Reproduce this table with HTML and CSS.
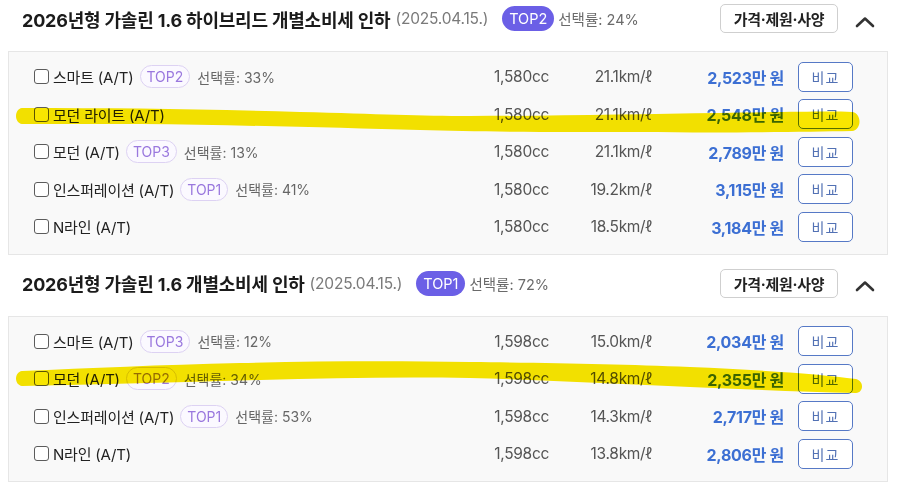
FILE: index.html
```html
<!DOCTYPE html>
<html lang="ko">
<head>
<meta charset="utf-8">
<title>트림 목록</title>
<link rel="stylesheet" href="styles.css">
</head>
<body>
<div class="page">
  <section class="group group-first">
    <header class="group-head">
      <h2 class="title">2026년형 가솔린 1.6 하이브리드 개별소비세 인하</h2>
      <span class="date">(2025.04.15.)</span>
      <span class="badge-fill">TOP2</span>
      <span class="head-rate">선택률: 24%</span>
      <button class="spec-btn">가격·제원·사양</button>
      <svg class="chev" width="20" height="12" viewBox="0 0 20 12"><path d="M2 10 L10 2.5 L18 10" fill="none" stroke="#333" stroke-width="2.6" stroke-linecap="round" stroke-linejoin="round"/></svg>
    </header>
    <div class="panel">
      <div class="row">
        <div class="name"><span class="check"></span><span class="label">스마트 (A/T)</span><span class="badge-line">TOP2</span><span class="rate">선택률: 33%</span></div>
        <div class="cc">1,580cc</div><div class="km">21.1km/ℓ</div><div class="price">2,523만 원</div><div class="cmp"><button class="cmp-btn">비교</button></div>
      </div>
      <div class="row">
        <div class="name"><span class="check"></span><span class="label">모던 라이트 (A/T)</span></div>
        <div class="cc">1,580cc</div><div class="km">21.1km/ℓ</div><div class="price">2,548만 원</div><div class="cmp"><button class="cmp-btn">비교</button></div>
      </div>
      <div class="row">
        <div class="name"><span class="check"></span><span class="label">모던 (A/T)</span><span class="badge-line">TOP3</span><span class="rate">선택률: 13%</span></div>
        <div class="cc">1,580cc</div><div class="km">21.1km/ℓ</div><div class="price">2,789만 원</div><div class="cmp"><button class="cmp-btn">비교</button></div>
      </div>
      <div class="row">
        <div class="name"><span class="check"></span><span class="label">인스퍼레이션 (A/T)</span><span class="badge-line">TOP1</span><span class="rate">선택률: 41%</span></div>
        <div class="cc">1,580cc</div><div class="km">19.2km/ℓ</div><div class="price">3,115만 원</div><div class="cmp"><button class="cmp-btn">비교</button></div>
      </div>
      <div class="row">
        <div class="name"><span class="check"></span><span class="label">N라인 (A/T)</span></div>
        <div class="cc">1,580cc</div><div class="km">18.5km/ℓ</div><div class="price">3,184만 원</div><div class="cmp"><button class="cmp-btn">비교</button></div>
      </div>
    </div>
  </section>

  <section class="group">
    <header class="group-head">
      <h2 class="title">2026년형 가솔린 1.6 개별소비세 인하</h2>
      <span class="date">(2025.04.15.)</span>
      <span class="badge-fill">TOP1</span>
      <span class="head-rate">선택률: 72%</span>
      <button class="spec-btn">가격·제원·사양</button>
      <svg class="chev" width="20" height="12" viewBox="0 0 20 12"><path d="M2 10 L10 2.5 L18 10" fill="none" stroke="#333" stroke-width="2.6" stroke-linecap="round" stroke-linejoin="round"/></svg>
    </header>
    <div class="panel">
      <div class="row">
        <div class="name"><span class="check"></span><span class="label">스마트 (A/T)</span><span class="badge-line">TOP3</span><span class="rate">선택률: 12%</span></div>
        <div class="cc">1,598cc</div><div class="km">15.0km/ℓ</div><div class="price">2,034만 원</div><div class="cmp"><button class="cmp-btn">비교</button></div>
      </div>
      <div class="row">
        <div class="name"><span class="check"></span><span class="label">모던 (A/T)</span><span class="badge-line">TOP2</span><span class="rate">선택률: 34%</span></div>
        <div class="cc">1,598cc</div><div class="km">14.8km/ℓ</div><div class="price">2,355만 원</div><div class="cmp"><button class="cmp-btn">비교</button></div>
      </div>
      <div class="row">
        <div class="name"><span class="check"></span><span class="label">인스퍼레이션 (A/T)</span><span class="badge-line">TOP1</span><span class="rate">선택률: 53%</span></div>
        <div class="cc">1,598cc</div><div class="km">14.3km/ℓ</div><div class="price">2,717만 원</div><div class="cmp"><button class="cmp-btn">비교</button></div>
      </div>
      <div class="row">
        <div class="name"><span class="check"></span><span class="label">N라인 (A/T)</span></div>
        <div class="cc">1,598cc</div><div class="km">13.8km/ℓ</div><div class="price">2,806만 원</div><div class="cmp"><button class="cmp-btn">비교</button></div>
      </div>
    </div>
  </section>

  <svg class="marker" width="900" height="489" viewBox="0 0 900 489">
    <path d="M22 104 C120 104 200 105 300 108 C380 110 420 112 470 112 C560 112 640 110 720 109 C790 108 830 107 852 108 C862 109 862 126 852 127 C800 128 720 129 640 128 C560 128 480 128 420 126 C340 124 240 121 140 120 C90 120 50 120 22 120 C14 119 14 105 22 104 Z" fill="#f8e600"/>
    <path d="M22 367 C90 364 160 361 240 359 C320 357 400 357 470 358 C560 359 620 360 690 363 C760 366 820 370 856 375 C864 377 864 388 856 389 C800 388 740 385 690 383 C620 380 540 376 470 374 C400 373 330 374 260 376 C180 378 100 381 22 382 C14 381 14 368 22 367 Z" fill="#f8e600"/>
  </svg>
</div>
</body>
</html>
```

FILE: styles.css
```css
* { box-sizing: border-box; }

html, body {
  margin: 0;
  padding: 0;
  background: #ffffff;
}

body {
  font-family: Inter, "Noto Sans CJK KR", "Noto Sans", sans-serif;
  color: #222;
  width: 900px;
  height: 489px;
  overflow: hidden;
}

.page {
  position: relative;
  width: 900px;
  height: 489px;
}

.group { margin-top: 13.5px; }
.group-first { margin-top: 3.5px; }

.group-head {
  display: flex;
  align-items: center;
  height: 30px;
  padding: 0 25px 0 22px;
  margin-bottom: 17.5px;
}

.title {
  margin: 0;
  font-size: 18px;
  font-weight: 700;
  color: #1b1b1b;
  letter-spacing: -0.2px;
  white-space: nowrap;
}

.date {
  margin-left: 5px;
  font-size: 15.5px;
  color: #7a7a7a;
  letter-spacing: -0.2px;
}

.badge-fill {
  margin-left: 14px;
  height: 25px;
  padding: 0 7px;
  border-radius: 13px;
  background: #6b5fe6;
  color: #fff;
  font-size: 14.5px;
  line-height: 25px;
}

.head-rate {
  margin-left: 4px;
  font-size: 14.5px;
  color: #6a6a6a;
}

.spec-btn {
  margin-left: auto;
  width: 118px;
  height: 29px;
  padding: 0;
  border: 1px solid #cfcfcf;
  border-radius: 5px;
  background: #fff;
  font-family: inherit;
  font-size: 15px;
  font-weight: 700;
  color: #222;
  letter-spacing: -0.3px;
}

.chev {
  margin-left: 17px;
  margin-top: 6px;
}

.panel {
  margin: 0 12px 0 8px;
  border: 1px solid #e6e6e6;
  background: #f9f9f9;
  padding: 6px 34px 8px 25px;
}

.row {
  display: grid;
  grid-template-columns: 1fr 79px 103px 132px 69px;
  align-items: center;
  height: 37.5px;
}

.name {
  display: flex;
  align-items: center;
  white-space: nowrap;
}

.check {
  width: 15px;
  height: 15px;
  border: 1.3px solid #5c5c5c;
  border-radius: 3px;
  background: #fff;
  margin-right: 4px;
}

.label {
  font-size: 15px;
  color: #222;
  letter-spacing: -0.2px;
}

.badge-line {
  margin-left: 6px;
  height: 23px;
  padding: 0 6px;
  border: 1px solid #ddd2f3;
  border-radius: 12px;
  background: #fbf9ff;
  color: #9a78de;
  font-size: 14px;
  line-height: 21px;
}

.rate {
  margin-left: 7px;
  font-size: 14px;
  color: #666;
}

.cc, .km {
  text-align: right;
  font-size: 15.5px;
  color: #555;
  letter-spacing: -0.3px;
}

.price {
  text-align: right;
  font-size: 16px;
  font-weight: 700;
  color: #3c6fd3;
  letter-spacing: -0.3px;
}

.cmp {
  display: flex;
  justify-content: flex-end;
}

.cmp-btn {
  width: 55px;
  height: 30px;
  padding: 0;
  border: 1px solid #5679c6;
  border-radius: 5px;
  background: #fff;
  font-family: inherit;
  font-size: 14px;
  color: #5271b4;
  letter-spacing: 1px;
}

.marker {
  position: absolute;
  left: 0;
  top: 0;
  mix-blend-mode: multiply;
  pointer-events: none;
}
```
